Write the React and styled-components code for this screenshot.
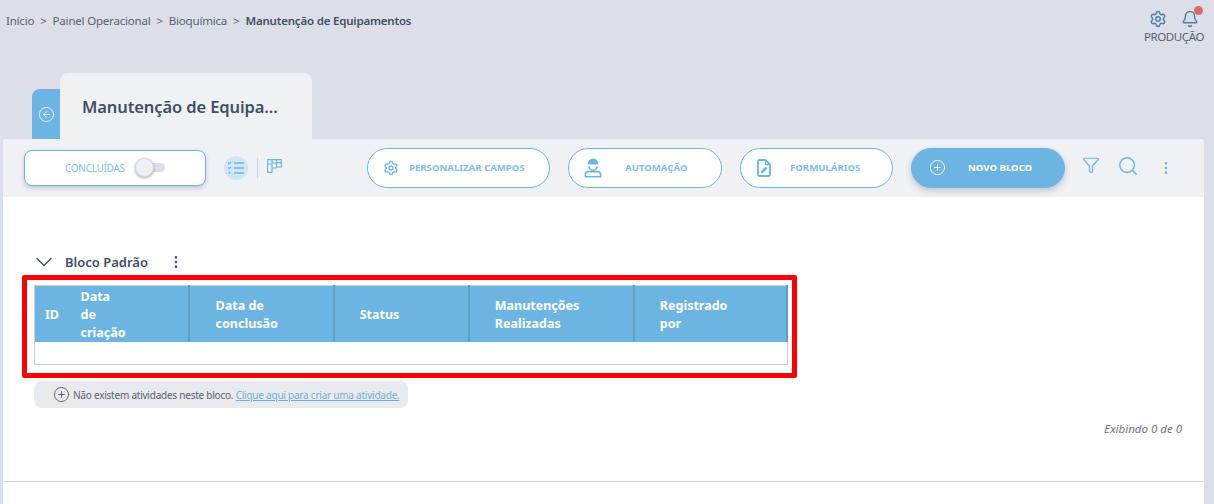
import React from 'react'
import styled, { createGlobalStyle } from 'styled-components'
import { Settings, Bell, Filter, Search, EllipsisVertical, ChevronDown, CirclePlus, CircleArrowLeft } from 'lucide-react'

const GlobalStyle = createGlobalStyle`
    html, body {
        margin: 0;
        padding: 0;
        background: #dcdfe7;
        font-family: "Noto Sans", "Open Sans", sans-serif;
    }
    * { box-sizing: border-box; }
`

const BLUE = '#6cb5e3'

const Page = styled.div`
    width: 1214px;
    height: 504px;
    overflow: hidden;
    display: flex;
    flex-direction: column;
`

const TopBar = styled.header`
    height: 73px;
    display: flex;
    justify-content: space-between;
    padding: 10px 10px 0 6px;
`

const Crumbs = styled.nav`
    display: flex;
    gap: 6px;
    height: 20px;
    align-items: center;
    font-size: 11.5px;
    letter-spacing: -0.2px;
    color: #566273;
`

const CrumbCurrent = styled.strong`
    color: #3f4f63;
    font-weight: 600;
`

const EnvBox = styled.div`
    display: flex;
    flex-direction: column;
    align-items: flex-end;
    color: #4d7fa6;
`

const EnvIcons = styled.div`
    display: flex;
    gap: 14px;
    padding-right: 5px;
`

const BellWrap = styled.span`
    position: relative;
    display: flex;
`

const BellDot = styled.span`
    position: absolute;
    top: -4px;
    right: -4px;
    width: 9px;
    height: 9px;
    border-radius: 50%;
    background: #d96a6a;
`

const EnvLabel = styled.span`
    font-size: 11.5px;
    letter-spacing: -0.4px;
    color: #566273;
    line-height: 16px;
    margin-top: 1px;
`

const TabRow = styled.div`
    height: 66px;
    display: flex;
    align-items: flex-end;
    padding-left: 32px;
`

const BackTab = styled.button`
    width: 28px;
    height: 50px;
    border: 0;
    padding: 0;
    background: ${BLUE};
    color: #eef6fc;
    border-radius: 8px 0 0 0;
    display: flex;
    align-items: center;
    justify-content: center;
`

const Tab = styled.div`
    width: 252px;
    height: 66px;
    background: #eff1f5;
    border-radius: 8px 8px 0 0;
    padding: 22px 0 0 22px;
    font-size: 16.5px;
    letter-spacing: -0.1px;
    line-height: 24px;
    font-weight: 600;
    color: #3f4f63;
`

const Panel = styled.main`
    margin: 0 10px 0 3px;
    flex: 1;
    background: #fff;
    border-radius: 4px 4px 0 0;
    display: flex;
    flex-direction: column;
`

const Toolbar = styled.div`
    height: 58px;
    background: #eff1f5;
    border-radius: 4px 4px 0 0;
    display: flex;
    align-items: center;
    padding: 0 0 0 21px;
`

const ToggleCard = styled.div`
    width: 182px;
    height: 36px;
    margin-top: -1px;
    background: #fff;
    border: 1px solid ${BLUE};
    border-radius: 8px;
    box-shadow: 0 2px 4px rgba(60, 70, 90, 0.25);
    display: flex;
    align-items: center;
    padding-left: 40px;
    gap: 16px;
    font-size: 10px;
    letter-spacing: -0.3px;
    color: #83bde6;
`

const Track = styled.span`
    position: relative;
    display: block;
    width: 24px;
    height: 9px;
    border-radius: 5px;
    background: #dcdfe5;
`

const Knob = styled.span`
    position: absolute;
    left: -6px;
    top: -5px;
    width: 19px;
    height: 19px;
    border-radius: 50%;
    background: #eff0f3;
    border: 1px solid #d8d8d8;
    box-shadow: 0 1px 3px rgba(0, 0, 0, 0.35);
`

const ViewSwitch = styled.div`
    display: flex;
    align-items: center;
    margin-left: 18px;
    color: ${BLUE};
`

const ViewActive = styled.span`
    width: 24px;
    height: 24px;
    border-radius: 50%;
    background: #cfe6f5;
    display: flex;
    align-items: center;
    justify-content: center;
`

const ViewDivider = styled.span`
    width: 1px;
    height: 20px;
    background: #cdd3da;
    margin: 0 9px;
`

const KanbanWrap = styled.span`
    display: flex;
    margin-top: -4px;
`

const Actions = styled.div`
    display: flex;
    align-items: center;
    gap: 18px;
    margin-left: 85px;
`

const ActionButton = styled.button`
    width: ${props => props.$width}px;
    height: 40px;
    border-radius: 20px;
    border: 1px solid ${BLUE};
    background: ${props => props.$filled ? BLUE : '#fff'};
    color: ${props => props.$filled ? '#fff' : '#83bde6'};
    box-shadow: ${props => props.$filled ? '0 3px 6px rgba(60, 70, 90, 0.25)' : 'none'};
    display: flex;
    align-items: center;
    padding: 0 0 1px ${props => props.$pad}px;
    font-family: inherit;
    font-size: 9.6px;
    font-weight: 700;
    white-space: nowrap;
`

const ActionIcon = styled.span`
    display: flex;
    width: ${props => props.$width}px;
    color: ${props => props.$filled ? '#fff' : BLUE};
`

const ToolIcons = styled.div`
    display: flex;
    align-items: center;
    margin-left: 17px;
    color: ${BLUE};
`

const ToolIcon = styled.span`
    display: flex;
    width: ${props => props.$width}px;
    margin-top: ${props => props.$top || 0}px;
`

const Content = styled.section`
    flex: 1;
    padding: 54px 22px 0 19px;
    display: flex;
    flex-direction: column;
`

const BlockHead = styled.div`
    height: 22px;
    display: flex;
    align-items: center;
    padding-left: 8px;
    font-size: 13px;
    font-weight: 600;
    color: #3f4f63;
`

const BlockTitle = styled.span`
    width: 103px;
    margin-left: 7px;
`

const BlockMenu = styled.span`
    display: flex;
`

const Marked = styled.div`
    width: 775px;
    height: 103px;
    margin-top: 2px;
    border: 5px solid #fe0000;
    border-radius: 2px;
    padding: 5px 4px 0 7px;
    background: #fff;
`

const Grid = styled.table`
    width: 754px;
    height: 80px;
    table-layout: fixed;
    border-collapse: collapse;
    border: 1px solid #c8d0d8;
`

const HeadCell = styled.th`
    height: 56px;
    padding: 2px 0 0 ${props => props.$pad}px;
    background: ${BLUE};
    border-right: ${props => props.$plain ? '0' : '2px solid #5d9fc9'};
    color: #fff;
    font-size: 12.5px;
    line-height: 18px;
    font-weight: 700;
    text-align: left;
    width: ${props => props.$width}px;
`

const EmptyCell = styled.td`
    height: 22px;
    background: #fff;
`

const Notice = styled.div`
    width: 374px;
    height: 27px;
    margin: 3px 0 0 12px;
    background: #e9eaee;
    border-radius: 8px;
    display: flex;
    align-items: center;
    padding-left: 19px;
    gap: 3px;
    font-size: 10px;
    letter-spacing: -0.23px;
    color: #566273;
    white-space: nowrap;

    svg {
        flex-shrink: 0;
        color: #3f4f63;
    }
`

const NoticeLink = styled.a`
    color: #6cafd8;
    text-decoration: underline;
`

const Counter = styled.div`
    margin-top: 12px;
    text-align: right;
    font-size: 11.5px;
    line-height: 18px;
    font-style: italic;
    color: #6a7186;
`

const Rule = styled.hr`
    margin: 43px -22px 0 -19px;
    border: 0;
    border-top: 1px solid #d5d5d8;
`

const ChecklistIcon = () => (
    <svg width="18" height="14" viewBox="0 0 18 14" fill="none" stroke="currentColor" strokeWidth="1.6">
        <path d="M7 2h10M7 7h10M7 12h10" />
        <path d="M1 1.500l1.200 1.200L4 .8M1 6.500l1.200 1.200L4 5.800" strokeWidth="1.100" />
        <circle cx="2.400" cy="12" r="1" fill="currentColor" stroke="none" />
    </svg>
)

const KanbanIcon = () => (
    <svg width="15" height="14" viewBox="0 0 15 14" fill="none" stroke="currentColor" strokeWidth="1.200">
        <path d="M.6.600h4.400v12.800H.6zM5 .6h4.500v8.400H5zM9.500.6h4.900v7.400H9.500zM.6 5h4.400M5 4h4.500M9.500 3.600h4.900" />
    </svg>
)

const WorkerIcon = () => (
    <svg width="18" height="20" viewBox="0 0 18 20" fill="none" stroke="currentColor" strokeWidth="1.600">
        <path d="M3.800 5.600a5.200 5.200 0 0 1 10.400 0v.9H3.800z" fill="currentColor" stroke="none" />
        <path d="M5 8.400a4 4 0 0 0 8 0" />
        <path d="M1.400 18.800v-2.400a2.800 2.800 0 0 1 2.800-2.800h9.600a2.800 2.800 0 0 1 2.800 2.800v2.400z" />
    </svg>
)

const FormIcon = () => (
    <svg width="14" height="18" viewBox="0 0 14 18">
        <path d="M2.600 1h5.900L13 5.500v9.900a1.600 1.600 0 0 1-1.600 1.600H2.600A1.600 1.600 0 0 1 1 15.400V2.600A1.600 1.600 0 0 1 2.600 1z" fill="none" stroke="currentColor" strokeWidth="1.800" strokeLinejoin="round" />
        <path d="M8.500 1v4.500H13" fill="none" stroke="currentColor" strokeWidth="1.400" />
        <path d="M3.800 14.300l.5-2.400 4.300-4.300 1.900 1.900-4.300 4.300z" fill="currentColor" />
    </svg>
)

const columns = [
    { width: 46, pad: 10, plain: true, lines: ['ID'] },
    { width: 108, pad: 0, lines: ['Data', 'de', 'criação'] },
    { width: 145, pad: 26, lines: ['Data de', 'conclusão'] },
    { width: 135, pad: 25, lines: ['Status'] },
    { width: 165, pad: 25, lines: ['Manutenções', 'Realizadas'] },
    { width: 153, pad: 25, lines: ['Registrado', 'por'] },
]

const App = () => {
    return (
        <Page>
            <GlobalStyle />
            <TopBar>
                <Crumbs>
                    <span>Início</span><span>&gt;</span>
                    <span>Painel Operacional</span><span>&gt;</span>
                    <span>Bioquímica</span><span>&gt;</span>
                    <CrumbCurrent>Manutenção de Equipamentos</CrumbCurrent>
                </Crumbs>
                <EnvBox>
                    <EnvIcons>
                        <Settings size={18} />
                        <BellWrap>
                            <Bell size={18} />
                            <BellDot />
                        </BellWrap>
                    </EnvIcons>
                    <EnvLabel>PRODUÇÃO</EnvLabel>
                </EnvBox>
            </TopBar>
            <TabRow>
                <BackTab><CircleArrowLeft size={17} strokeWidth={1.3} /></BackTab>
                <Tab>Manutenção de Equipa...</Tab>
            </TabRow>
            <Panel>
                <Toolbar>
                    <ToggleCard>
                        CONCLUÍDAS
                        <Track><Knob /></Track>
                    </ToggleCard>
                    <ViewSwitch>
                        <ViewActive><ChecklistIcon /></ViewActive>
                        <ViewDivider />
                        <KanbanWrap><KanbanIcon /></KanbanWrap>
                    </ViewSwitch>
                    <Actions>
                        <ActionButton $width={183} $pad={15}>
                            <ActionIcon $width={26}><Settings size={16} /></ActionIcon>
                            PERSONALIZAR CAMPOS
                        </ActionButton>
                        <ActionButton $width={154} $pad={15}>
                            <ActionIcon $width={41}><WorkerIcon /></ActionIcon>
                            AUTOMAÇÃO
                        </ActionButton>
                        <ActionButton $width={153} $pad={16}>
                            <ActionIcon $width={33}><FormIcon /></ActionIcon>
                            FORMULÁRIOS
                        </ActionButton>
                        <ActionButton $width={154} $pad={17} $filled>
                            <ActionIcon $width={39} $filled><CirclePlus size={17} strokeWidth={1.3} /></ActionIcon>
                            NOVO BLOCO
                        </ActionButton>
                    </Actions>
                    <ToolIcons>
                        <ToolIcon $width={35} $top={-6}><Filter size={18} strokeWidth={1.6} /></ToolIcon>
                        <ToolIcon $width={41} $top={-4}><Search size={22} strokeWidth={1.6} /></ToolIcon>
                        <ToolIcon $width={16}><EllipsisVertical size={16} /></ToolIcon>
                    </ToolIcons>
                </Toolbar>
                <Content>
                    <BlockHead>
                        <ChevronDown size={28} strokeWidth={1.1} />
                        <BlockTitle>Bloco Padrão</BlockTitle>
                        <BlockMenu><EllipsisVertical size={16} /></BlockMenu>
                    </BlockHead>
                    <Marked>
                        <Grid>
                            <thead>
                                <tr>
                                    {columns.map(col => (
                                        <HeadCell key={col.lines[0] + col.width} $width={col.width} $pad={col.pad} $plain={col.plain}>
                                            {col.lines.map((line, i) => <div key={i}>{line}</div>)}
                                        </HeadCell>
                                    ))}
                                </tr>
                            </thead>
                            <tbody>
                                <tr><EmptyCell colSpan={6} /></tr>
                            </tbody>
                        </Grid>
                    </Marked>
                    <Notice>
                        <CirclePlus size={17} strokeWidth={1.2} />
                        <span>Não existem atividades neste bloco. <NoticeLink>Clique aqui para criar uma atividade.</NoticeLink></span>
                    </Notice>
                    <Counter>Exibindo 0 de 0</Counter>
                    <Rule />
                </Content>
            </Panel>
        </Page>
    )
}

export default App
